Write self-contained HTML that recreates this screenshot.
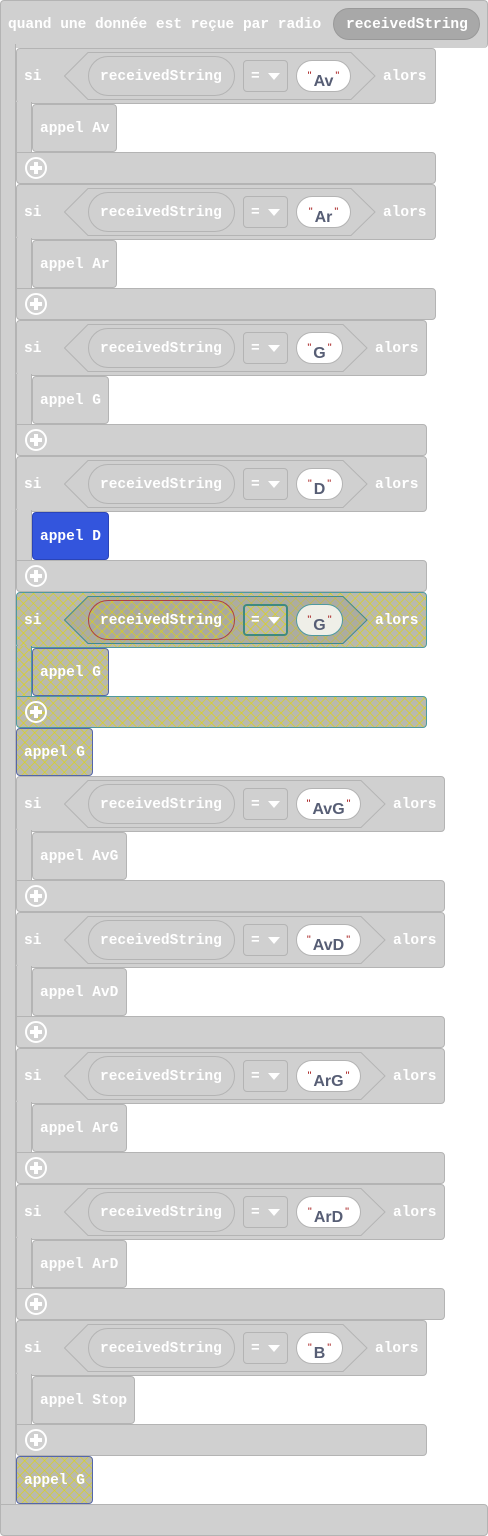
<!DOCTYPE html>
<html><head><meta charset="utf-8"><style>
body{margin:0;width:488px;height:1536px;background:#fff;position:relative;overflow:hidden;font-family:"Liberation Mono",monospace;font-weight:bold;}
.g{position:absolute;background:#d0d0d0;border:1px solid #b4b4b4;box-sizing:border-box;}
.t{position:absolute;color:#fff;font-size:14.5px;line-height:16px;white-space:nowrap;margin-top:1px}
.blk{position:absolute;left:16px;}
.hl{background-color:#b9b9ae;background-image:repeating-linear-gradient(45deg,rgba(225,215,0,.55) 0 1px,transparent 1px 7px),repeating-linear-gradient(-45deg,rgba(225,215,0,.55) 0 1px,transparent 1px 7px);border-color:#4f9aa0;}
.pl{position:absolute;width:22px;height:22px;border:2.5px solid #fff;border-radius:50%;box-sizing:border-box;left:9px;}
.pl:before{content:"";position:absolute;left:6.5px;top:2.5px;width:4px;height:12px;background:#fff}
.pl:after{content:"";position:absolute;left:2.5px;top:6.5px;width:12px;height:4px;background:#fff}
.var{position:absolute;left:72px;top:8px;width:147px;height:40px;border-radius:20px;}
.dd{position:absolute;left:227px;top:12px;width:45px;height:32px;border-radius:4px;}
.tri{position:absolute;left:252px;top:25px;width:0;height:0;border-left:6px solid transparent;border-right:6px solid transparent;border-top:7px solid #fff;}
.str{position:absolute;left:280px;top:12px;height:32px;border-radius:16px;background:#fff;border:1px solid #b4b4b4;box-sizing:border-box;color:#575e75;font-family:"Liberation Sans",sans-serif;font-weight:bold;font-size:16px;text-align:center;line-height:31px;}
.str i{color:#a31515;font-style:normal;font-weight:normal;font-size:11px;vertical-align:7px;margin:0 2px;}
svg{position:absolute;}
</style></head><body>
<div class="g" style="left:0;top:0;width:488px;height:48px;border-radius:4px;border-bottom:none"></div>
<div class="g" style="left:0;top:44px;width:16px;height:1464px;border-top:none;border-bottom:none"></div>
<div class="g" style="left:0;top:1504px;width:488px;height:32px;border-radius:0 4px 4px 4px;"></div>
<span class="t" style="left:8px;top:16px">quand une donnée est reçue par radio</span>
<div class="g" style="left:333px;top:8px;width:147px;height:32px;border-radius:16px;background:#a8a8a8;border-color:#999"></div>
<span class="t" style="left:346px;top:16px">receivedString</span>

<div class="blk" style="top:48px;width:420px">
<div class="g" style="left:0;top:0;width:420px;height:56px;border-radius:4px"></div>
<div class="g" style="left:0;top:54px;width:16px;height:52px;border-top:none;border-bottom:none"></div>
<div class="g" style="left:0;top:104px;width:420px;height:32px;border-radius:0 4px 4px 4px"></div>
<span class="t" style="left:8px;top:20px">si</span>
<svg style="left:48px;top:4px" width="312" height="48"><path d="M0.5,24 L24,0.5 L287,0.5 L311,24 L287,47.5 L24,47.5Z" fill="#d0d0d0" stroke="#b4b4b4"/></svg>
<div class="g var"></div><span class="t" style="left:84px;top:20px">receivedString</span>
<div class="g dd"></div><span class="t" style="left:235px;top:20px">=</span><div class="tri"></div>
<div class="str" style="width:55px"><i>"</i>Av<i>"</i></div>
<span class="t" style="left:367px;top:20px">alors</span>
<div class="g" style="left:16px;top:56px;width:85px;height:48px;border-radius:4px"></div>
<span class="t" style="left:24px;top:72px">appel Av</span>
<div class="pl" style="top:109px"></div>
</div>

<div class="blk" style="top:184px;width:420px">
<div class="g" style="left:0;top:0;width:420px;height:56px;border-radius:4px"></div>
<div class="g" style="left:0;top:54px;width:16px;height:52px;border-top:none;border-bottom:none"></div>
<div class="g" style="left:0;top:104px;width:420px;height:32px;border-radius:0 4px 4px 4px"></div>
<span class="t" style="left:8px;top:20px">si</span>
<svg style="left:48px;top:4px" width="312" height="48"><path d="M0.5,24 L24,0.5 L287,0.5 L311,24 L287,47.5 L24,47.5Z" fill="#d0d0d0" stroke="#b4b4b4"/></svg>
<div class="g var"></div><span class="t" style="left:84px;top:20px">receivedString</span>
<div class="g dd"></div><span class="t" style="left:235px;top:20px">=</span><div class="tri"></div>
<div class="str" style="width:55px"><i>"</i>Ar<i>"</i></div>
<span class="t" style="left:367px;top:20px">alors</span>
<div class="g" style="left:16px;top:56px;width:85px;height:48px;border-radius:4px"></div>
<span class="t" style="left:24px;top:72px">appel Ar</span>
<div class="pl" style="top:109px"></div>
</div>

<div class="blk" style="top:320px;width:411px">
<div class="g" style="left:0;top:0;width:411px;height:56px;border-radius:4px"></div>
<div class="g" style="left:0;top:54px;width:16px;height:52px;border-top:none;border-bottom:none"></div>
<div class="g" style="left:0;top:104px;width:411px;height:32px;border-radius:0 4px 4px 4px"></div>
<span class="t" style="left:8px;top:20px">si</span>
<svg style="left:48px;top:4px" width="304" height="48"><path d="M0.5,24 L24,0.5 L279,0.5 L303,24 L279,47.5 L24,47.5Z" fill="#d0d0d0" stroke="#b4b4b4"/></svg>
<div class="g var"></div><span class="t" style="left:84px;top:20px">receivedString</span>
<div class="g dd"></div><span class="t" style="left:235px;top:20px">=</span><div class="tri"></div>
<div class="str" style="width:47px"><i>"</i>G<i>"</i></div>
<span class="t" style="left:359px;top:20px">alors</span>
<div class="g" style="left:16px;top:56px;width:77px;height:48px;border-radius:4px"></div>
<span class="t" style="left:24px;top:72px">appel G</span>
<div class="pl" style="top:109px"></div>
</div>

<div class="blk" style="top:456px;width:411px">
<div class="g" style="left:0;top:0;width:411px;height:56px;border-radius:4px"></div>
<div class="g" style="left:0;top:54px;width:16px;height:52px;border-top:none;border-bottom:none"></div>
<div class="g" style="left:0;top:104px;width:411px;height:32px;border-radius:0 4px 4px 4px"></div>
<span class="t" style="left:8px;top:20px">si</span>
<svg style="left:48px;top:4px" width="304" height="48"><path d="M0.5,24 L24,0.5 L279,0.5 L303,24 L279,47.5 L24,47.5Z" fill="#d0d0d0" stroke="#b4b4b4"/></svg>
<div class="g var"></div><span class="t" style="left:84px;top:20px">receivedString</span>
<div class="g dd"></div><span class="t" style="left:235px;top:20px">=</span><div class="tri"></div>
<div class="str" style="width:47px"><i>"</i>D<i>"</i></div>
<span class="t" style="left:359px;top:20px">alors</span>
<div class="g" style="left:16px;top:56px;width:77px;height:48px;border-radius:4px;background:#3355dd;border-color:#2a44b8"></div>
<span class="t" style="left:24px;top:72px">appel D</span>
<div class="pl" style="top:109px"></div>
</div>

<div class="blk" style="top:592px;width:411px">
<div class="g hl" style="left:0;top:0;width:411px;height:56px;border-radius:4px"></div>
<div class="g hl" style="left:0;top:54px;width:16px;height:52px;border-top:none;border-bottom:none"></div>
<div class="g hl" style="left:0;top:104px;width:411px;height:32px;border-radius:0 4px 4px 4px"></div>
<span class="t" style="left:8px;top:20px">si</span>
<svg style="left:48px;top:4px" width="304" height="48"><path d="M0.5,24 L24,0.5 L279,0.5 L303,24 L279,47.5 L24,47.5Z" fill="rgba(150,150,140,.35)" stroke="#3f8a90"/></svg>
<div class="g var hl" style="border-color:#b04040;background-color:#aaa9a0"></div><span class="t" style="left:84px;top:20px">receivedString</span>
<div class="g dd hl" style="border-color:#3f8a80;border-width:2px"></div><span class="t" style="left:235px;top:20px">=</span><div class="tri"></div>
<div class="str" style="width:47px;background:#efefe8;border-color:#4f9aa0"><i>"</i>G<i>"</i></div>
<span class="t" style="left:359px;top:20px">alors</span>
<div class="g hl" style="left:16px;top:56px;width:77px;height:48px;border-radius:4px;border-color:#5566aa"></div>
<span class="t" style="left:24px;top:72px">appel G</span>
<div class="pl" style="top:109px"></div>
</div>
<div class="g hl" style="left:16px;top:728px;width:77px;height:48px;border-radius:4px;border-color:#5566aa"></div>
<span class="t" style="left:24px;top:744px">appel G</span>

<div class="blk" style="top:776px;width:429px">
<div class="g" style="left:0;top:0;width:429px;height:56px;border-radius:4px"></div>
<div class="g" style="left:0;top:54px;width:16px;height:52px;border-top:none;border-bottom:none"></div>
<div class="g" style="left:0;top:104px;width:429px;height:32px;border-radius:0 4px 4px 4px"></div>
<span class="t" style="left:8px;top:20px">si</span>
<svg style="left:48px;top:4px" width="322" height="48"><path d="M0.5,24 L24,0.5 L297,0.5 L321,24 L297,47.5 L24,47.5Z" fill="#d0d0d0" stroke="#b4b4b4"/></svg>
<div class="g var"></div><span class="t" style="left:84px;top:20px">receivedString</span>
<div class="g dd"></div><span class="t" style="left:235px;top:20px">=</span><div class="tri"></div>
<div class="str" style="width:65px"><i>"</i>AvG<i>"</i></div>
<span class="t" style="left:377px;top:20px">alors</span>
<div class="g" style="left:16px;top:56px;width:95px;height:48px;border-radius:4px"></div>
<span class="t" style="left:24px;top:72px">appel AvG</span>
<div class="pl" style="top:109px"></div>
</div>

<div class="blk" style="top:912px;width:429px">
<div class="g" style="left:0;top:0;width:429px;height:56px;border-radius:4px"></div>
<div class="g" style="left:0;top:54px;width:16px;height:52px;border-top:none;border-bottom:none"></div>
<div class="g" style="left:0;top:104px;width:429px;height:32px;border-radius:0 4px 4px 4px"></div>
<span class="t" style="left:8px;top:20px">si</span>
<svg style="left:48px;top:4px" width="322" height="48"><path d="M0.5,24 L24,0.5 L297,0.5 L321,24 L297,47.5 L24,47.5Z" fill="#d0d0d0" stroke="#b4b4b4"/></svg>
<div class="g var"></div><span class="t" style="left:84px;top:20px">receivedString</span>
<div class="g dd"></div><span class="t" style="left:235px;top:20px">=</span><div class="tri"></div>
<div class="str" style="width:65px"><i>"</i>AvD<i>"</i></div>
<span class="t" style="left:377px;top:20px">alors</span>
<div class="g" style="left:16px;top:56px;width:95px;height:48px;border-radius:4px"></div>
<span class="t" style="left:24px;top:72px">appel AvD</span>
<div class="pl" style="top:109px"></div>
</div>

<div class="blk" style="top:1048px;width:429px">
<div class="g" style="left:0;top:0;width:429px;height:56px;border-radius:4px"></div>
<div class="g" style="left:0;top:54px;width:16px;height:52px;border-top:none;border-bottom:none"></div>
<div class="g" style="left:0;top:104px;width:429px;height:32px;border-radius:0 4px 4px 4px"></div>
<span class="t" style="left:8px;top:20px">si</span>
<svg style="left:48px;top:4px" width="322" height="48"><path d="M0.5,24 L24,0.5 L297,0.5 L321,24 L297,47.5 L24,47.5Z" fill="#d0d0d0" stroke="#b4b4b4"/></svg>
<div class="g var"></div><span class="t" style="left:84px;top:20px">receivedString</span>
<div class="g dd"></div><span class="t" style="left:235px;top:20px">=</span><div class="tri"></div>
<div class="str" style="width:65px"><i>"</i>ArG<i>"</i></div>
<span class="t" style="left:377px;top:20px">alors</span>
<div class="g" style="left:16px;top:56px;width:95px;height:48px;border-radius:4px"></div>
<span class="t" style="left:24px;top:72px">appel ArG</span>
<div class="pl" style="top:109px"></div>
</div>

<div class="blk" style="top:1184px;width:429px">
<div class="g" style="left:0;top:0;width:429px;height:56px;border-radius:4px"></div>
<div class="g" style="left:0;top:54px;width:16px;height:52px;border-top:none;border-bottom:none"></div>
<div class="g" style="left:0;top:104px;width:429px;height:32px;border-radius:0 4px 4px 4px"></div>
<span class="t" style="left:8px;top:20px">si</span>
<svg style="left:48px;top:4px" width="322" height="48"><path d="M0.5,24 L24,0.5 L297,0.5 L321,24 L297,47.5 L24,47.5Z" fill="#d0d0d0" stroke="#b4b4b4"/></svg>
<div class="g var"></div><span class="t" style="left:84px;top:20px">receivedString</span>
<div class="g dd"></div><span class="t" style="left:235px;top:20px">=</span><div class="tri"></div>
<div class="str" style="width:65px"><i>"</i>ArD<i>"</i></div>
<span class="t" style="left:377px;top:20px">alors</span>
<div class="g" style="left:16px;top:56px;width:95px;height:48px;border-radius:4px"></div>
<span class="t" style="left:24px;top:72px">appel ArD</span>
<div class="pl" style="top:109px"></div>
</div>

<div class="blk" style="top:1320px;width:411px">
<div class="g" style="left:0;top:0;width:411px;height:56px;border-radius:4px"></div>
<div class="g" style="left:0;top:54px;width:16px;height:52px;border-top:none;border-bottom:none"></div>
<div class="g" style="left:0;top:104px;width:411px;height:32px;border-radius:0 4px 4px 4px"></div>
<span class="t" style="left:8px;top:20px">si</span>
<svg style="left:48px;top:4px" width="304" height="48"><path d="M0.5,24 L24,0.5 L279,0.5 L303,24 L279,47.5 L24,47.5Z" fill="#d0d0d0" stroke="#b4b4b4"/></svg>
<div class="g var"></div><span class="t" style="left:84px;top:20px">receivedString</span>
<div class="g dd"></div><span class="t" style="left:235px;top:20px">=</span><div class="tri"></div>
<div class="str" style="width:47px"><i>"</i>B<i>"</i></div>
<span class="t" style="left:359px;top:20px">alors</span>
<div class="g" style="left:16px;top:56px;width:103px;height:48px;border-radius:4px"></div>
<span class="t" style="left:24px;top:72px">appel Stop</span>
<div class="pl" style="top:109px"></div>
</div>

<div class="g hl" style="left:16px;top:1456px;width:77px;height:48px;border-radius:4px;border-color:#5566aa"></div>
<span class="t" style="left:24px;top:1472px">appel G</span>
</body></html>
